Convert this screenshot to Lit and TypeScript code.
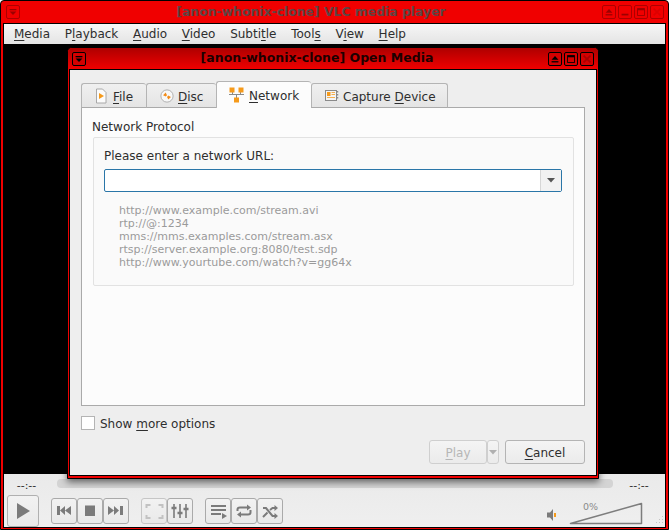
import { LitElement, html, css, svg } from "lit";
import { customElement } from "lit/decorators.js";

const eject = svg`<path d="M3 8 7 3.500 11 8Z" fill="currentColor"/><rect x="3" y="9.500" width="8" height="1.500" fill="currentColor"/>`;
const minimize = svg`<rect x="3" y="9" width="8" height="2" fill="currentColor"/>`;
const maximize = svg`<rect x="3" y="3" width="8" height="8" fill="none" stroke="currentColor"/><rect x="3" y="3" width="8" height="2" fill="currentColor"/>`;
const closeX = svg`<path d="M3 3 11 11M11 3 3 11" stroke="currentColor" stroke-width="2"/>`;
const menuDown = svg`<rect x="3" y="3.500" width="8" height="1.500" fill="currentColor"/><path d="M3 6.500H11L7 10.500Z" fill="currentColor"/>`;

function wbtn(kind: unknown, cls = "") {
  return html`<span class="wbtn ${cls}"><svg viewBox="0 0 14 14" width="12" height="12">${kind}</svg></span>`;
}

const G = "#7b7b7b";
const icons = {
  play: svg`<path d="M10 8 23 16 10 24Z" fill="${G}"/>`,
  prev: svg`<path d="M6 8H9V17H6ZM9 12.500 14 8V17ZM14 12.500 20 8V17Z" fill="${G}"/>`,
  stop: svg`<rect x="8" y="7.500" width="10" height="10.500" fill="${G}"/>`,
  next: svg`<path d="M5 8 11 12.500 5 17ZM11 8 16 12.500 11 17ZM17 8H20V17H17Z" fill="${G}"/>`,
  full: svg`<path d="M5.500 10V7H9.500M17.500 7H21.500V10M21.500 17V20H17.500M9.500 20H5.500V17" fill="none" stroke="#c2c2c2" stroke-width="2"/>`,
  eq: svg`<path d="M7 6V20M13 6V20M19 6V20" stroke="${G}" stroke-width="1.600"/><path d="M4.500 10H9.500M10.500 15H15.500M16.500 11H21.500" stroke="${G}" stroke-width="2.400"/>`,
  list: svg`<path d="M6 8H21M6 12H21M6 16H16" stroke="${G}" stroke-width="1.800"/><path d="M17 15 22 18 17 21Z" fill="${G}"/>`,
  loop: svg`<path d="M6.500 13V11.500Q6.500 9.500 9 9.500H17M19.500 12V14.500Q19.500 16.500 17 16.500H9" fill="none" stroke="${G}" stroke-width="2"/><path d="M16 6.500 20 9.500 16 12.500ZM10 13.500 6 16.500 10 19.500Z" fill="${G}"/>`,
  shuf: svg`<path d="M6 10H9L15.500 18H18M6 19 10.500 14.500M13 12 15.500 10H18" fill="none" stroke="${G}" stroke-width="2"/><path d="M17.500 7 21 10 17.500 13ZM17.500 15 21 18 17.500 21Z" fill="${G}"/>`,
};

function cbtn(icon: unknown, cls = "") {
  return html`<span class="cbtn ${cls}"><svg viewBox="0 0 26 26" width="26" height="26">${icon}</svg></span>`;
}

@customElement("open-media-dialog")
export class OpenMediaDialog extends LitElement {
  static styles = css`
    :host { display: flex; flex-direction: column; box-sizing: border-box; background: #f00000; border: 1px solid #000; border-radius: 5px 5px 0 0; padding: 0 1px 2px 1px; box-shadow: 0 3px 7px rgba(0,0,0,.55); color: #2e2e2e; }
    .tbar { height: 21px; margin: 0 -1px; padding: 0 4px; display: flex; align-items: center; background: linear-gradient(#ae0000, #f00000); border-radius: 4px 4px 0 0; flex: none; }
    .tbar b { flex: 1; text-align: center; font-size: 12.500px; color: #1c0000; padding: 0 0 2px 0; }
    .btns { display: flex; gap: 2px; }
    .wbtn { width: 14px; height: 14px; box-sizing: border-box; border: 1px solid #000; border-radius: 2px; display: flex; align-items: center; justify-content: center; color: #000; background: #d40000; }
    .wbtn.x { color: #a80000; }
    .body { flex: 1; border: 1px solid #000; background: #eeeeee; padding: 11px; display: flex; flex-direction: column; min-height: 0; }
    .tabs { display: flex; align-items: flex-end; height: 27px; flex: none; position: relative; z-index: 1; margin-bottom: -1px; }
    .tab { height: 25px; box-sizing: border-box; display: flex; align-items: center; border: 1px solid #b4b4b4; border-bottom-color: #aaa; border-right-width: 0; border-radius: 3px 3px 0 0; background: linear-gradient(#f0f0f0, #e4e4e4); padding-top: 2px; }
    .tab svg { flex: none; margin-top: -2px; }
    .tab.last { border-right-width: 1px; }
    .tab.active { height: 27px; background: #fcfcfc; border-bottom: 0; padding-top: 2px; }
    .t1 { width: 65px; padding-left: 12px; gap: 5px; }
    .t2 { width: 70px; padding-left: 13px; gap: 4px; }
    .t3 { width: 95px; padding-left: 12px; gap: 5px; }
    .t4 { width: 137px; padding-left: 13px; gap: 4px; }
    u { text-decoration-thickness: 1px; text-underline-offset: 2px; }
    .pane { height: 299px; box-sizing: border-box; flex: none; background: #fcfcfc; border: 1px solid #aaa; padding: 10px 10px 0 10px; }
    .lbl { height: 18px; line-height: 18px; display: block; }
    .group { margin: 1px 0 0 1px; width: 481px; height: 149px; box-sizing: border-box; background: #fafafa; border: 1px solid #e2e2e2; border-radius: 2px; padding: 9px 11px 0 10px; }
    .combo { height: 23px; box-sizing: border-box; margin-top: 4px; border: 1px solid #2a76a8; border-radius: 2px; background: #fff; display: flex; justify-content: flex-end; }
    .arrow { width: 20px; background: #f2f2f2; border-left: 1px solid #d6d6d6; display: flex; align-items: center; justify-content: center; }
    .hints { margin: 12px 0 0 15px; font-size: 11px; line-height: 13px; color: #9a9a9a; }
    .opt { margin-top: 10px; height: 14px; display: flex; align-items: center; gap: 5px; flex: none; }
    .opt-text { padding-top: 2px; }
    .cb { width: 14px; height: 14px; box-sizing: border-box; border: 1px solid #b4b4b4; background: #fff; }
    .actions { margin-top: auto; display: flex; justify-content: flex-end; flex: none; }
    .pb { height: 24px; box-sizing: border-box; padding-top: 2px; border: 1px solid #b4b4b4; border-radius: 3px; background: linear-gradient(#f4f4f4, #ebebeb); display: flex; align-items: center; justify-content: center; }
    .play { width: 58px; color: #b6b6b6; border-color: #cfcfcf; }
    .drop { width: 12px; margin-right: 6px; padding-top: 0; border-color: #cfcfcf; }
    .cancel { width: 80px; }
  `;
  render() {
    return html`
      <div class="tbar">
        ${wbtn(menuDown)}
        <b>[anon-whonix-clone] Open Media</b>
        <span class="btns">${wbtn(eject)}${wbtn(maximize)}${wbtn(closeX, "x")}</span>
      </div>
      <div class="body">
        <div class="tabs">
          <div class="tab t1">
            <svg viewBox="0 0 14 16" width="14" height="16"><path d="M2.500 1H8.500L12 4.500V15H2.500Z" fill="#fbfbfb" stroke="#a8a8a8"/><path d="M5 5 10 8 5 11Z" fill="#f59a1b"/></svg>
            <span><u>F</u>ile</span>
          </div>
          <div class="tab t2">
            <svg viewBox="0 0 16 16" width="14" height="14"><circle cx="8" cy="8" r="7" fill="#f8f8f8" stroke="#a8a8a8"/><path d="M3.500 7 6.500 4 8 7 6.500 8.500ZM12.500 9 9.500 12 8 9 9.500 7.500Z" fill="#f28c1a"/></svg>
            <span><u>D</u>isc</span>
          </div>
          <div class="tab t3 active">
            <svg viewBox="0 0 15 16" width="15" height="16"><path d="M3.500 5V7.500H11.500V5M7.500 7.500V11M0 7.500H15" fill="none" stroke="#8a8a8a"/><rect x="0.500" y="0.500" width="5" height="5" fill="#f59a1b"/><rect x="9.500" y="0.500" width="5" height="5" fill="#f59a1b"/><rect x="5" y="10.500" width="5" height="5" fill="#f59a1b"/></svg>
            <span><u>N</u>etwork</span>
          </div>
          <div class="tab t4 last">
            <svg viewBox="0 0 14 14" width="14" height="14"><rect x="0.500" y="1.500" width="11" height="10" fill="#f4f4f4" stroke="#8a8a8a"/><rect x="2" y="3" width="3.500" height="4" fill="#f59a1b"/><path d="M6.500 3.500H10M6.500 5.500H10M2 8.500H10" stroke="#f5b050"/><path d="M12.500 2V3.500M12.500 5V6.500M12.500 8V9.500" stroke="#8a8a8a" stroke-width="1.500"/></svg>
            <span>Capture <u>D</u>evice</span>
          </div>
        </div>
        <div class="pane">
          <span class="lbl">Network Protocol</span>
          <div class="group">
            <span class="lbl">Please enter a network URL:</span>
            <div class="combo"><span class="arrow"><svg viewBox="0 0 8 5" width="8" height="5"><path d="M0 0H8L4 4.500Z" fill="#555"/></svg></span></div>
            <div class="hints">
              http://www.example.com/stream.avi<br>
              rtp://@:1234<br>
              mms://mms.examples.com/stream.asx<br>
              rtsp://server.example.org:8080/test.sdp<br>
              http://www.yourtube.com/watch?v=gg64x
            </div>
          </div>
        </div>
        <div class="opt"><span class="cb"></span><span class="opt-text">Show <u>m</u>ore options</span></div>
        <div class="actions">
          <span class="pb play"><span><u>P</u>lay</span></span>
          <span class="pb drop"><svg viewBox="0 0 8 5" width="8" height="5"><path d="M0 0H8L4 4.500Z" fill="#b0b0b0"/></svg></span>
          <span class="pb cancel"><span><u>C</u>ancel</span></span>
        </div>
      </div>
    `;
  }
}

@customElement("app-root")
export class AppRoot extends LitElement {
  static styles = css`
    :host { display: block; position: relative; width: 669px; height: 530px; font-family: "DejaVu Sans", sans-serif; font-size: 12px; color: #2e2e2e; overflow: hidden; }
    .win { width: 100%; height: 100%; box-sizing: border-box; border: 1px solid #000; background: #f00000; padding: 0 2px 1px 2px; display: flex; flex-direction: column; border-radius: 4px 4px 0 0; }
    .tbar { height: 22px; flex: none; display: flex; align-items: center; padding: 0 2px 0 3px; }
    .tbar b { flex: 1; text-align: center; font-size: 12.400px; color: #5c4545; padding-bottom: 2px; }
    .btns { display: flex; gap: 2px; }
    .wbtn { width: 14px; height: 14px; box-sizing: border-box; border: 1px solid #ad0000; border-radius: 2px; display: flex; align-items: center; justify-content: center; color: #9c0000; background: #f00000; }
    .wbtn.x { color: #dd0000; }
    .frame { flex: 1; min-height: 0; border: 1px solid #000; background: #000; display: flex; flex-direction: column; }
    .menu { height: 20px; flex: none; display: flex; align-items: center; padding-left: 10px; gap: 14.700px; background: linear-gradient(#f6f6f6, #e4e4e4); }
    u { text-decoration-thickness: 1px; text-underline-offset: 2px; }
    .video { flex: 1; background: #000; }
    .controls { height: 53px; flex: none; background: linear-gradient(#eaeaea, #efefef); display: flex; flex-direction: column; position: relative; }
    .seekrow { height: 20px; display: flex; align-items: flex-start; flex: none; }
    .time { width: 53px; text-align: center; font-size: 11px; line-height: 12px; margin-top: 6px; padding-right: 8px; box-sizing: border-box; }
    .time.r { width: 52px; padding: 0; }
    .seek { flex: 1; height: 9px; margin-top: 5px; border-radius: 4px; background: #d4d4d4; }
    .btnrow { flex: 1; display: flex; align-items: center; padding-left: 3px; }
    .big { width: 32px; height: 32px; box-sizing: border-box; border: 1px solid #b0b0b0; border-radius: 3px; background: linear-gradient(#f2f2f2, #e9e9e9); display: flex; margin-right: 12px; }
    .big svg { margin: -1px; flex: none; }
    .grp { display: flex; margin-right: 12px; }
    .cbtn { width: 26px; height: 26px; box-sizing: border-box; border: 1px solid #aaa; border-radius: 3px; background: linear-gradient(#f2f2f2, #e9e9e9); display: flex; align-items: center; justify-content: center; flex: none; }
    .cbtn svg { margin: -1px; flex: none; }
    .cbtn.dis { border-color: #c6c6c6; }
    .vol { margin-left: auto; display: flex; align-items: flex-end; margin-right: 22px; height: 28px; }
    .spk { margin: 0 13px 4px 0; }
    .volbar { position: relative; width: 74px; height: 26px; }
    .pct { position: absolute; left: 14px; top: 2px; font-size: 9.500px; line-height: 11px; color: #8a8a8a; }
    .grip { position: absolute; right: 1px; bottom: 1px; }
    .dlg { position: absolute; left: 67px; top: 47px; width: 532px; height: 432px; }
  `;
  render() {
    return html`
      <div class="win">
        <div class="tbar">
          ${wbtn(menuDown)}
          <b>[anon-whonix-clone] VLC media player</b>
          <span class="btns">${wbtn(eject)}${wbtn(minimize)}${wbtn(maximize)}${wbtn(closeX, "x")}</span>
        </div>
        <div class="frame">
          <div class="menu">
            <span><u>M</u>edia</span>
            <span>P<u>l</u>ayback</span>
            <span><u>A</u>udio</span>
            <span><u>V</u>ideo</span>
            <span>Subti<u>t</u>le</span>
            <span>Tool<u>s</u></span>
            <span>V<u>i</u>ew</span>
            <span><u>H</u>elp</span>
          </div>
          <div class="video"></div>
          <div class="controls">
            <div class="seekrow"><span class="time">--:--</span><div class="seek"></div><span class="time r">--:--</span></div>
            <div class="btnrow">
              <span class="big"><svg viewBox="0 0 32 32" width="32" height="32">${icons.play}</svg></span>
              <span class="grp">${cbtn(icons.prev)}${cbtn(icons.stop)}${cbtn(icons.next)}</span>
              <span class="grp">${cbtn(icons.full, "dis")}${cbtn(icons.eq)}</span>
              <span class="grp">${cbtn(icons.list)}${cbtn(icons.loop)}${cbtn(icons.shuf)}</span>
              <span class="vol">
                <svg class="spk" viewBox="0 0 9 12" width="9" height="12"><path d="M0 3.500H3L6 0V12L3 8.500H0Z" fill="#7b7b7b"/><rect x="7" y="4" width="2" height="4" fill="#f59a1b"/></svg>
                <span class="volbar">
                  <svg viewBox="0 0 74 26" width="74" height="26"><path d="M1.500 24.500 72.500 4.500V24.500Z" fill="none" stroke="#7d7d7d" stroke-width="1.500" stroke-linejoin="round"/></svg>
                  <span class="pct">0%</span>
                </span>
              </span>
            </div>
            <svg class="grip" viewBox="0 0 12 12" width="12" height="12"><path d="M10 2h1v1h-1zM7 5h1v1H7zM10 5h1v1h-1zM4 8h1v1H4zM7 8h1v1H7zM10 8h1v1h-1z" fill="#c4c4c4"/></svg>
          </div>
        </div>
      </div>
      <open-media-dialog class="dlg"></open-media-dialog>
    `;
  }
}
